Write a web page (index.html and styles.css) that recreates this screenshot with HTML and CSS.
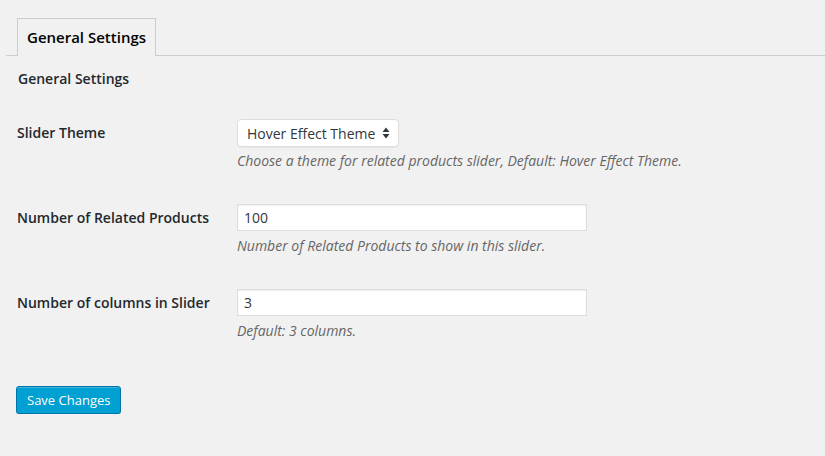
FILE: index.html
```html
<!DOCTYPE html>
<html>
<head>
<meta charset="utf-8">
<link rel="stylesheet" href="styles.css">
</head>
<body>
<div class="wrap">
  <div class="tabs">
    <a class="tab">General Settings</a>
  </div>
  <div class="content">
    <h2 class="heading">General Settings</h2>
    <div class="form">
      <div class="row">
        <div class="label">Slider Theme</div>
        <div class="field">
          <div class="select">
            <span>Hover Effect Theme</span>
            <svg class="arrows" width="8" height="12" viewBox="0 0 8 12"><path d="M4 0.5 L7.5 5 L0.5 5 Z M4 11.5 L7.5 7 L0.5 7 Z" fill="#32373c"/></svg>
          </div>
          <p class="desc">Choose a theme for related products slider, Default: Hover Effect Theme.</p>
        </div>
      </div>
      <div class="row">
        <div class="label">Number of Related Products</div>
        <div class="field">
          <div class="input">100</div>
          <p class="desc">Number of Related Products to show in this slider.</p>
        </div>
      </div>
      <div class="row">
        <div class="label">Number of columns in Slider</div>
        <div class="field">
          <div class="input">3</div>
          <p class="desc">Default: 3 columns.</p>
        </div>
      </div>
    </div>
    <button class="btn">Save Changes</button>
  </div>
</div>
</body>
</html>
```
FILE: styles.css
```css
html, body {
  margin: 0;
  padding: 0;
  background: #f1f1f1;
  font-family: "Open Sans", "Noto Sans", sans-serif;
  color: #23282d;
}
.wrap {
  padding-top: 18px;
}
.tabs {
  display: flex;
  margin-left: 6px;
  padding-left: 11px;
  border-bottom: 1px solid #ccc;
}
.tab {
  display: block;
  border: 1px solid #ccc;
  border-bottom: 0;
  background: #f1f1f1;
  margin-bottom: -1px;
  padding: 0 9px;
  height: 37px;
  line-height: 37px;
  font-size: 15px;
  font-weight: 600;
  color: #000;
}
.content {
  padding: 0 16px;
}
.heading {
  margin: 13px 0 0 2px;
  font-size: 14px;
  line-height: 20px;
  font-weight: 600;
  color: #23282d;
}
.form {
  margin-top: 15px;
}
.row {
  display: grid;
  grid-template-columns: 221px 1fr;
  padding: 15px 0 18px;
}
.label {
  font-size: 14px;
  font-weight: 600;
  line-height: 28px;
  padding-left: 1px;
}
.select {
  box-sizing: border-box;
  width: 162px;
  height: 28px;
  border: 1px solid #ddd;
  border-radius: 4px;
  background: #fff;
  display: flex;
  align-items: center;
  justify-content: space-between;
  padding: 0 8px 0 9px;
  font-size: 14px;
  color: #32373c;
  box-shadow: 0 1px 1px rgba(0,0,0,.04);
}
.input {
  box-sizing: border-box;
  width: 350px;
  height: 27px;
  border: 1px solid #ddd;
  background: #fff;
  box-shadow: inset 0 1px 2px rgba(0,0,0,.07);
  padding: 0 6px;
  font-size: 14px;
  line-height: 25px;
  color: #32373c;
}
.desc {
  margin: 4px 0 0;
  font-size: 14px;
  line-height: 20px;
  font-style: italic;
  color: #666;
}
.row:nth-child(n+2) .desc {
  margin-top: 5px;
}
.btn {
  margin-top: 27px;
  height: 28px;
  padding: 0 10px;
  background: #00a0d2;
  border: 1px solid #0073aa;
  border-radius: 3px;
  color: #fff;
  font-family: "Open Sans", "Noto Sans", sans-serif;
  font-size: 13px;
  line-height: 26px;
  box-shadow: inset 0 1px 0 rgba(120,200,230,.5), 0 1px 0 rgba(0,0,0,.15);
}
```
